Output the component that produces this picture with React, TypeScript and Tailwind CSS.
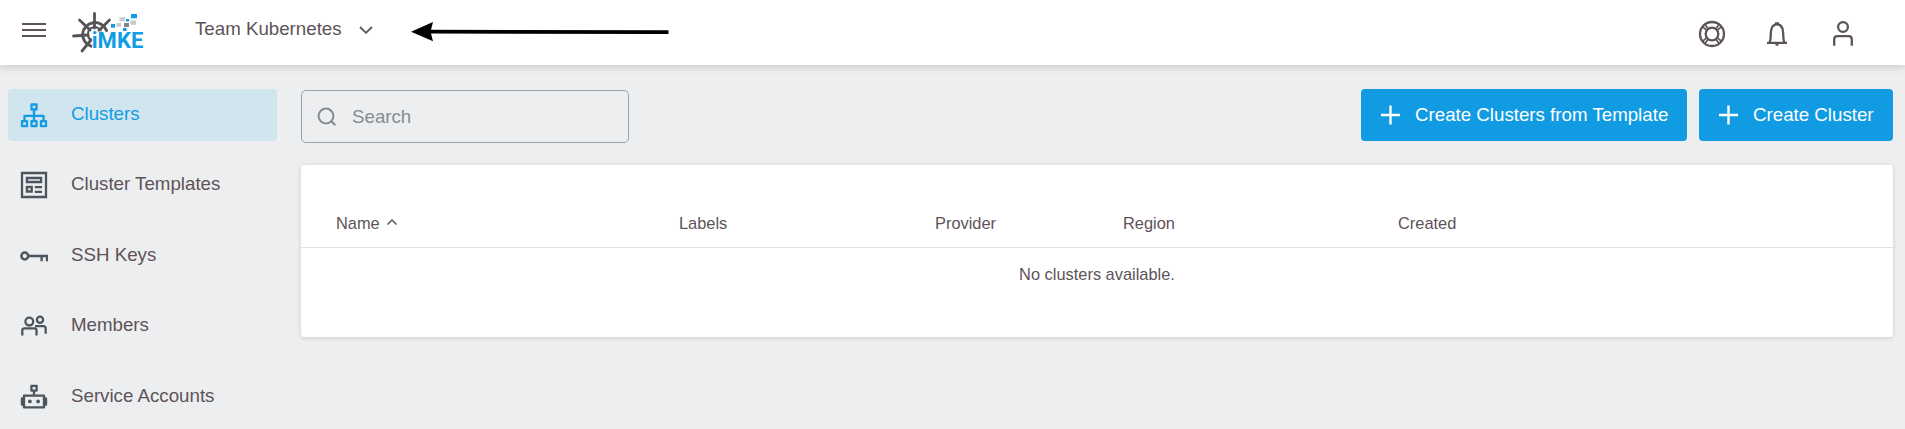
import type { ReactNode } from 'react';

function Logo() {
  return (
    <svg className="h-[44px] w-[74px] shrink-0" viewBox="70 10 74 44" fill="none">
      <g stroke="#555559" strokeLinecap="round" strokeLinejoin="round">
        <path d="M106.5 30.5A12.4 12.4 0 0 0 82.6 34A12.4 12.4 0 0 0 91 46.2" strokeWidth="3" />
        <path d="M94.5 13.5V28M79.5 20L90 30M109.5 20L99 30.5M73.5 36L88 35M82 51L91 40" strokeWidth="2.8" />
        <path d="M100.8 31.5A6.6 6.6 0 0 0 88 34.2A6.6 6.6 0 0 0 91 40" strokeWidth="2.2" />
      </g>
      <path d="M131 14h6v4.2h-6zM111 24h4v3.8h-4zM126 19h3v2.5h-3zM123 28h3.5v3h-3.5z" fill="#129ce4" />
      <path d="M119.5 17.3h5.5v4h-5.5zM116.5 23h4.5v3.7h-4.5zM130.5 20.5h5.5v4.2h-5.5z" fill="#c7cbcc" />
      <path d="M124 23h5v4h-5z" fill="#7d8b8e" />
      <text
        x="91.8"
        y="48"
        textLength="51.5"
        lengthAdjust="spacingAndGlyphs"
        fill="#129ce4"
        stroke="#ffffff"
        strokeWidth="0.8"
        paintOrder="stroke"
        className="font-['Roboto',sans-serif] text-[21.8px] font-bold"
      >
        iMKE
      </text>
    </svg>
  );
}

function Icon({ children, className = '' }: { children: ReactNode; className?: string }) {
  return (
    <svg
      viewBox="0 0 28 28"
      className={`h-7 w-7 shrink-0 ${className}`}
      fill="none"
      stroke="currentColor"
      strokeWidth="2.3"
    >
      {children}
    </svg>
  );
}

const ClustersIcon = (
  <Icon>
    <path d="M11.5 3.5h5v5h-5zM2 20.2h5v5H2zM11.5 20.2h5v5h-5zM21 20.2h5v5h-5zM14 8.5v11.7M4.5 20v-5.2h19V20" strokeLinejoin="round" />
  </Icon>
);
const TemplatesIcon = (
  <Icon>
    <path d="M2 2h24v24H2zM6.9 7h14.2v4H6.9zM6.9 16h4.8v4.5H6.9zM14.8 16.2h7.2M14.8 20.8h7.2" />
  </Icon>
);
const KeyIcon = (
  <Icon>
    <circle cx="4.8" cy="14" r="3.4" strokeWidth="2.5" />
    <path d="M8.4 14h18.6v5.2M21.6 14v5.2" strokeWidth="2.3" />
  </Icon>
);
const MembersIcon = (
  <Icon>
    <circle cx="9.3" cy="9.6" r="3.9" />
    <circle cx="20" cy="7.7" r="3.1" />
    <path d="M2.3 23.4v-4.8q0-2.2 2.2-2.2h9.8q2.2 0 2.2 2.2v4.8M15 14.2h8.3q2.4 0 2.4 2.4v5.1" />
  </Icon>
);
const RobotIcon = (
  <Icon>
    <path d="M11.4 2.8h5.2v4.8h-5.2zM14 7.6v5M4 12.6h20v11.8H4z" strokeLinejoin="round" />
    <path d="M2.2 15.7v5.8M25.8 15.7v5.8" strokeWidth="2.8" strokeLinecap="round" />
    <circle cx="9.9" cy="18.4" r="1.9" fill="currentColor" stroke="none" />
    <circle cx="18.1" cy="18.4" r="1.9" fill="currentColor" stroke="none" />
  </Icon>
);

const navigation = [
  { label: 'Clusters', icon: ClustersIcon, active: true },
  { label: 'Cluster Templates', icon: TemplatesIcon },
  { label: 'SSH Keys', icon: KeyIcon },
  { label: 'Members', icon: MembersIcon },
  { label: 'Service Accounts', icon: RobotIcon },
];

function Header() {
  return (
    <header className="relative z-10 flex h-[65px] shrink-0 bg-white shadow-[0_2px_8px_rgba(0,0,0,0.16)]">
      <button aria-label="Menu" className="mt-[22px] ml-[22px] h-4 w-6">
        <svg viewBox="0 0 24 16" className="h-4 w-6" stroke="currentColor" strokeWidth="2">
          <path d="M0 2h24M0 8h24M0 14h24" />
        </svg>
      </button>
      <div className="mt-[10px] ml-6">
        <Logo />
      </div>
      <button className="mt-[15px] ml-[51px] flex h-7 items-center">
        <span className="w-[147px] text-left whitespace-nowrap">Team Kubernetes</span>
        <svg viewBox="0 0 14 8" className="mt-[2px] ml-[17px] h-2 w-[14px]" fill="none" stroke="currentColor" strokeWidth="1.8">
          <path d="M1 1l6 5.8L13 1" />
        </svg>
      </button>
      <svg viewBox="0 0 258 20" className="mt-[22px] ml-[38px] h-5 w-[258px]">
        <path d="M0 9.8L22 0L20 7.8L257.5 8.2V12L20 11.6L22 19.2z" fill="#000000" />
      </svg>
      <div className="mt-[20px] mr-12 ml-auto flex gap-[37.5px]">
        <Icon>
          <circle cx="14" cy="14" r="12" />
          <circle cx="14" cy="14" r="6.3" />
          <path d="M5 7.2l4.2 3.4M7.2 5l3.4 4.2M23 7.2l-4.2 3.4M20.8 5l-3.4 4.2M5 20.8l4.2-3.4M7.2 23l3.4-4.2M23 20.8l-4.2-3.4M20.8 23l-3.4-4.2" strokeWidth="1.7" />
        </Icon>
        <Icon className="-translate-x-px">
          <path d="M4 22.8h20M6.6 22c1.3-2 1-5.7 1.3-10 .3-4.8 2.4-7.6 6.1-7.6s5.8 2.8 6.1 7.6c.3 4.3 0 8 1.3 10" />
          <path d="M12 2.3h4v2h-4zM12 23.5h4l-.8 2.3h-2.4z" fill="currentColor" stroke="none" />
        </Icon>
        <Icon>
          <circle cx="14" cy="7" r="4.9" />
          <path d="M5.2 25.8v-6.6q0-3.1 3.1-3.1h11.4q3.1 0 3.1 3.1v6.6" />
        </Icon>
      </div>
    </header>
  );
}

function Sidebar() {
  return (
    <nav className="flex w-[269px] shrink-0 flex-col gap-[18.5px]">
      {navigation.map((item) => (
        <a
          key={item.label}
          className={`flex h-[52px] shrink-0 items-center rounded-[4px] pl-3 ${
            item.active ? 'bg-[#d1e5ee] text-[#129ce4]' : ''
          }`}
        >
          <span className={item.active ? 'mb-px' : 'mb-px text-[#4b555d]'}>{item.icon}</span>
          <span className="mb-[2px] ml-[23px]">{item.label}</span>
        </a>
      ))}
    </nav>
  );
}

function CreateButton({ label, className }: { label: string; className: string }) {
  return (
    <button className={`flex h-[52px] items-center rounded-[4px] bg-[#109be3] pl-5 text-white ${className}`}>
      <svg viewBox="0 0 20 20" className="h-5 w-5 -translate-x-[0.5px]" stroke="currentColor" strokeWidth="2.4">
        <path d="M.5 10h19M10 .5v19" />
      </svg>
      <span className="mt-px ml-[14px] whitespace-nowrap">{label}</span>
    </button>
  );
}

function ClusterTable() {
  return (
    <section className="mt-6 h-[172px] rounded-[3px] bg-white text-[16.4px] shadow-[0_1px_4px_rgba(0,0,0,0.15)]">
      <div className="grid h-[83px] grid-cols-[343px_256px_188px_275px_1fr] items-start border-b border-[#dfe1e3] pt-[46px] pl-[35px] leading-6">
        <div className="flex items-center">
          Name
          <svg viewBox="0 0 10 6" className="mb-[2px] ml-[7px] h-[6px] w-[10px]" fill="none" stroke="currentColor" strokeWidth="1.5">
            <path d="M.5 5.5L5 1l4.5 4.5" />
          </svg>
        </div>
        <div>Labels</div>
        <div>Provider</div>
        <div>Region</div>
        <div>Created</div>
      </div>
      <p className="pt-[14px] text-center leading-6">No clusters available.</p>
    </section>
  );
}

export default function App() {
  return (
    <div className="flex h-[429px] flex-col overflow-hidden bg-[#edeef0] font-['Liberation_Sans',Arial,sans-serif] text-[18.72px] text-[#5d5358]">
      <Header />
      <div className="flex min-h-0 flex-1 gap-6 pt-6 pr-3 pl-2">
        <Sidebar />
        <main className="min-w-0 flex-1">
          <div className="flex h-[52px]">
            <label className="mt-px flex h-[53px] w-[328px] shrink-0 items-center rounded-[5px] border border-[#9ba3a9] pl-[15px] text-[#838c94]">
              <svg viewBox="0 0 20 20" className="h-5 w-5" fill="none" stroke="currentColor" strokeWidth="2">
                <circle cx="9" cy="9" r="7.4" />
                <path d="M14.3 14.3l4 4" />
              </svg>
              <input
                placeholder="Search"
                className="mt-[2px] ml-[15px] w-[240px] bg-transparent outline-none placeholder:text-[#838c94]"
              />
            </label>
            <div className="ml-auto flex gap-3">
              <CreateButton label="Create Clusters from Template" className="w-[326px]" />
              <CreateButton label="Create Cluster" className="w-[194px]" />
            </div>
          </div>
          <ClusterTable />
        </main>
      </div>
    </div>
  );
}
